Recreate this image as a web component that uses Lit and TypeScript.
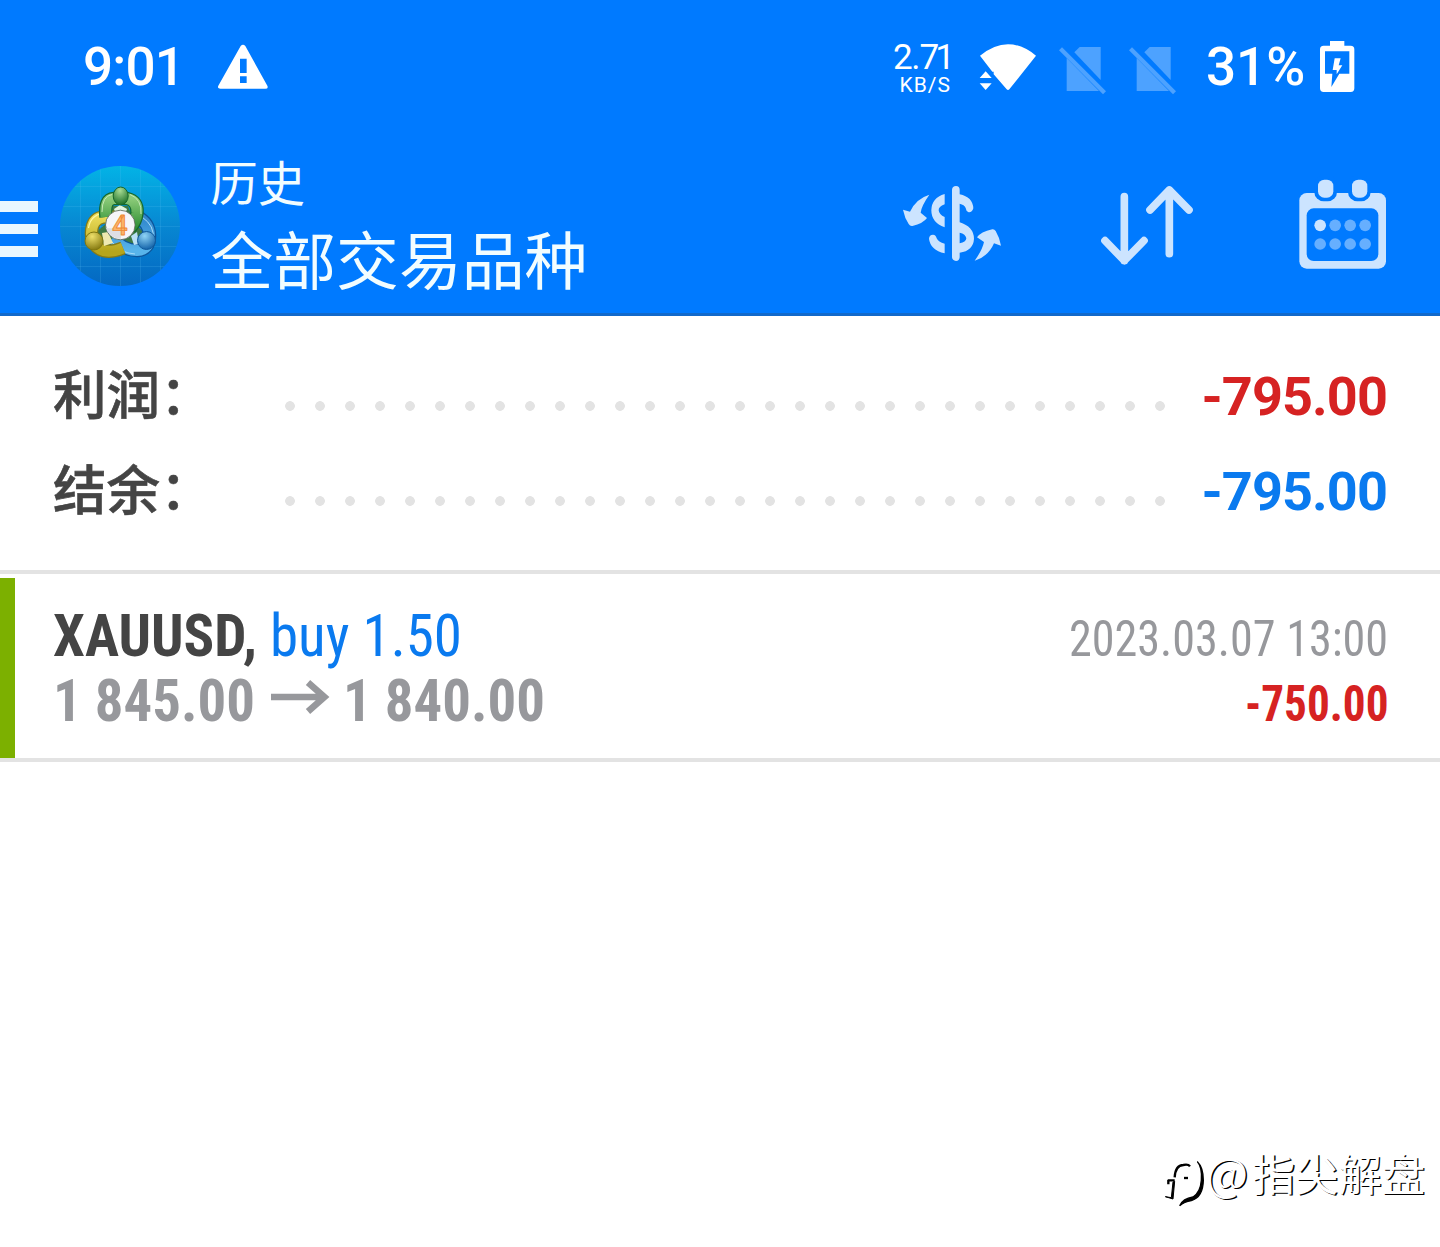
import { LitElement, html, svg, css } from "lit";
import { customElement, property } from "lit/decorators.js";

/* Single line of condensed type, fitted to a known advance width. */
@customElement("fit-line")
class FitLine extends LitElement {
  @property() text = "";
  @property({ type: Number }) width = 100;
  @property({ type: Number }) size = 60;
  @property({ type: Number }) weight = 400;

  static styles = css`
    :host { display: block; height: 65px; }
    svg { display: block; overflow: visible; }
    text {
      font-family: "Roboto Condensed", Roboto, sans-serif;
      font-stretch: 75%;
      fill: currentColor;
    }
  `;

  render() {
    return html`<svg width=${this.width} height="65">
      <text x="0" y="52" font-size=${this.size} font-weight=${this.weight}
        textLength=${this.width} lengthAdjust="spacingAndGlyphs">${this.text}</text>
    </svg>`;
  }
}

@customElement("status-bar")
class StatusBar extends LitElement {
  static styles = css`
    :host { display: flex; align-items: flex-start; height: 134px; box-sizing: border-box;
      padding: 40px 85px 0 83px; color: #fff; font-family: Roboto, sans-serif; }
    svg { display: block; height: 56px; flex: none; }
    .big { font-size: 53px; font-weight: 500; line-height: 55px; white-space: nowrap; }
    .time { width: 135px; letter-spacing: -0.8px; }
    .spacer { flex: 1; }
    .net { width: 58px; text-align: right; margin-right: 28px; }
    .rate { font-size: 35px; line-height: 35px; letter-spacing: -2.4px; }
    .dot { letter-spacing: -1px; margin-left: 1px; }
    .seven { letter-spacing: -4px; }
    .unit { font-size: 21px; line-height: 20px; letter-spacing: 1px; }
    .wifi { width: 58px; margin-right: 22px; }
    .sim { width: 47px; margin-right: 23px; }
    .last { margin-right: 30px; }
    .pct { width: 113px; }
    .bat { width: 36px; }
  `;

  sim(cls: string) {
    return html`<svg class=${cls} viewBox="567 60 141 168" fill="#4da2ff">
      <path d="M613 97 629 81H692V180Z"/>
      <path d="M590 114 687 213H590Z"/>
      <path d="M576 82 708 214 699 223 567 91Z"/>
    </svg>`;
  }

  render() {
    return html`
      <div class="big time">9:01</div>
      <svg width="50" viewBox="474 60 150 168">
        <path fill="#fff" fill-rule="evenodd" d="M542 78Q549 70 556 78L622 197Q626 206 616 206H481Q471 206 475 197ZM540 116V159H560V116ZM540 169V189H560V169Z"/>
      </svg>
      <div class="spacer"></div>
      <div class="net"><div class="rate">2<span class="dot">.</span><span class="seven">7</span>1</div><div class="unit">KB/S</div></div>
      <svg class="wifi" viewBox="327 60 174 168" fill="#fff">
        <path d="M330 107Q414 38 498 107L418 208Q414 212 410 208L371 163V155H367Z"/>
        <path d="M347 154 365 174H329ZM329 190H365L347 210Z"/>
      </svg>
      ${this.sim("sim")}${this.sim("sim last")}
      <div class="big pct">31%</div>
      <svg class="bat" viewBox="387 60 108 168">
        <path fill="#fff" fill-rule="evenodd" d="M420 63H463V77H482Q493 77 493 88V205Q493 216 482 216H401Q390 216 390 205V88Q390 77 401 77H420ZM405 94V161H427L424 201 448 161H478V94ZM434 115H452L446 136H457L440 163V150H428Z"/>
      </svg>`;
  }
}

@customElement("app-logo")
class AppLogo extends LitElement {
  static styles = css`
    :host { display: block; width: 120px; height: 120px; }
    svg { display: block; }
    text { font-family: Roboto, sans-serif; font-weight: 500; }
  `;

  render() {
    const lines = [20.5, 40.5, 60.5, 80.5, 100.5];
    return html`<svg width="120" height="120" viewBox="0 0 120 120">
      <defs>
        <linearGradient id="bg" x1="0" y1="0" x2="0" y2="1">
          <stop offset="0" stop-color="#03b3e6"/><stop offset=".5" stop-color="#0787d2"/><stop offset="1" stop-color="#0468c2"/>
        </linearGradient>
        <linearGradient id="g" x1="0" y1="0" x2="0" y2="1"><stop offset="0" stop-color="#8ccb79"/><stop offset="1" stop-color="#2f8f35"/></linearGradient>
        <linearGradient id="y" x1="0" y1="0" x2="0" y2="1"><stop offset="0" stop-color="#e9da58"/><stop offset="1" stop-color="#b5a51c"/></linearGradient>
        <linearGradient id="b" x1="0" y1="0" x2="0" y2="1"><stop offset="0" stop-color="#2f86cc"/><stop offset="1" stop-color="#58b4ea"/></linearGradient>
        <radialGradient id="gh" cx=".45" cy=".2" r=".75"><stop offset="0" stop-color="#a9dc94"/><stop offset="1" stop-color="#23752c"/></radialGradient>
        <radialGradient id="yh" cx=".4" cy=".25" r=".75"><stop offset="0" stop-color="#eee06a"/><stop offset="1" stop-color="#877b12"/></radialGradient>
        <radialGradient id="bh" cx=".4" cy=".25" r=".75"><stop offset="0" stop-color="#8fd4f6"/><stop offset="1" stop-color="#1464aa"/></radialGradient>
        <clipPath id="c"><circle cx="60" cy="60" r="60"/></clipPath>
      </defs>
      <g clip-path="url(#c)">
        <rect width="120" height="120" fill="url(#bg)"/>
        ${lines.map((v) => svg`<path d="M${v} 0V120M0 ${v}H120" stroke="#5cc4f2" stroke-opacity=".18"/>`)}
      </g>
      <g stroke-linejoin="round" fill="none">
        <path d="M48 56 53 40H68L75 58 86 68 80 82H40L34 68Z" fill="#3d7a45"/>
        <path d="M78 51Q89 57 89.500 69Q90 84 77 84.500Q62 84 53 72" stroke="#0d559a" stroke-width="13.500"/>
        <path d="M78 51Q89 57 89.500 69Q90 84 77 84.500Q62 84 53 72" stroke="url(#b)" stroke-width="11"/>
        <path d="M82 51Q95 60 93 73M75 88Q60 87 52 76" stroke="#a8dcf8" stroke-width="1"/>
        <path d="M55 51.500Q36 48 32.500 60Q29 73 37 81Q46 89 63 82" stroke="#857b17" stroke-width="13.500"/>
        <path d="M55 51.500Q36 48 32.500 60Q29 73 37 81Q46 89 63 82" stroke="url(#y)" stroke-width="11"/>
        <path d="M50 47Q31 46 28.500 62" stroke="#fff7a2" stroke-width="1.200"/>
        <path d="M46 51Q44 33 54 32.500H67Q78 35 77 47Q76 56 70 62" stroke="#16682d" stroke-width="13.500"/>
        <path d="M46 51Q44 33 54 32.500H67Q78 35 77 47Q76 56 70 62" stroke="url(#g)" stroke-width="11"/>
        <path d="M42 46Q42 30 52 28.500M70 28.500Q82 33 81 48" stroke="#c5e8b7" stroke-width="1"/>
        <path d="M54 43 60 39 67 43 65 48H56Z" fill="#e3f5dd"/>
        <path d="M42 67 48 66 53 77 44 80Z" fill="#eee9b0"/>
        <path d="M77 66 71 70 74 79 79 78Z" fill="#b9e0f5"/>
        <ellipse cx="60.700" cy="30" rx="7.500" ry="9" fill="url(#gh)" stroke="#17662a"/>
        <circle cx="34" cy="75" r="9" fill="url(#yh)" stroke="#80760f"/>
        <circle cx="86.500" cy="74.500" r="9" fill="url(#bh)" stroke="#10599b"/>
        <circle cx="60.300" cy="59" r="14.800" fill="#f6f6f8" stroke="#51604d" stroke-width=".8"/>
        <path d="M46 62 61 63V73Q49 72 46 62Z" fill="#dedee4"/>
        <text x="52.300" y="68.500" font-size="27" fill="#fdb56a" stroke="#ee8a35" stroke-width=".9">4</text>
      </g>
    </svg>`;
  }
}

@customElement("tool-bar")
class ToolBar extends LitElement {
  static styles = css`
    :host { display: flex; align-items: flex-start; height: 182px; box-sizing: border-box;
      border-bottom: 3px solid #1269ca; color: #fff; padding: 0 53px 0 0; }
    .menu { display: flex; flex-direction: column; gap: 12px; width: 38px; padding-top: 67px; margin-right: 22px; }
    .bar { height: 10.5px; background: #e9f7ff; }
    app-logo { margin-top: 32px; margin-right: 30.5px; }
    .titles { flex: 1; font-family: "Noto Sans CJK SC", sans-serif; padding-top: 16px; color: #f2fdff; }
    .small { font-size: 47.3px; line-height: 62px; font-weight: 400; }
    .large { font-size: 62.8px; line-height: 90px; font-weight: 400; }
    .icon { display: block; height: 96px; margin-top: 42px; flex: none; }
    .swap { width: 104px; margin-right: 96px; }
    .sort { width: 95px; margin-right: 103px; }
    .cal { width: 89px; }
  `;

  render() {
    return html`
      <div class="menu"><div class="bar"></div><div class="bar"></div><div class="bar"></div></div>
      <app-logo></app-logo>
      <div class="titles"><div class="small">历史</div><div class="large">全部交易品种</div></div>
      <svg class="icon swap" viewBox="60 48 312 288" fill="#cce4ff">
        <path d="M148 104Q124 138 122 158L141 174Q130 190 97 198Q90 199 86 192Q74 174 69 149L90 155Q108 116 148 104Z"/>
        <path d="M284 302Q307 270 312 246L291 232Q302 216 337 208Q343 207 347 213Q358 231 363 257L342 250Q325 290 284 302Z"/>
        <path d="M194 102V133Q175 140 176 151Q177 164 194 171V202Q154 188 154 151Q155 113 194 102Z"/>
        <path d="M147 236Q148 224 159 224Q168 225 170 235Q175 247 194 251V280Q151 270 147 236Z"/>
        <path fill-rule="evenodd" d="M216 89Q217 78 228 78Q239 79 239 89V103Q278 111 280 145Q276 158 266 157Q258 154 257 144Q253 134 239 131V187Q281 200 282 236Q280 272 239 278V292Q238 303 228 303Q217 302 216 292ZM239 218V250Q258 247 259 235Q257 222 239 218Z"/>
      </svg>
      <svg class="icon sort" viewBox="660 48 285 288" fill="none" stroke="#cce4ff" stroke-width="23" stroke-linecap="round" stroke-linejoin="round">
        <path d="M733 110V302M675 242 733 302 792 242"/>
        <path d="M868 281V90M810 150 868 90 927 150"/>
      </svg>
      <svg class="icon cal" viewBox="84 48 267 288">
        <rect x="88" y="99" width="260" height="227" rx="22" fill="#cce4ff"/>
        <rect x="133" y="46" width="68" height="78" rx="28" fill="#007aff"/>
        <rect x="234" y="46" width="68" height="78" rx="28" fill="#007aff"/>
        <rect x="144" y="59" width="46" height="54" rx="19" fill="#cce4ff"/>
        <rect x="246" y="59" width="46" height="54" rx="19" fill="#cce4ff"/>
        <rect x="110" y="145" width="215" height="158" rx="21" fill="#007aff"/>
        ${[0, 1, 2, 3, 4, 5, 6, 7].map((i) => svg`<circle cx=${150.5 + (i % 4) * 45} cy=${i < 4 ? 196 : 252} r="17.5" fill=${i === 0 ? "#cce4ff" : "#66afff"}/>`)}
      </svg>`;
  }
}

@customElement("app-root")
class AppRoot extends LitElement {
  static styles = css`
    :host { display: flex; flex-direction: column; width: 1440px; height: 1247px; background: #fff; overflow: hidden; }
    .head { background: #007aff; }
    .summary { height: 258px; box-sizing: border-box; padding-top: 34px; border-bottom: 4px solid #e3e3e3; }
    .row { display: flex; height: 95px; padding: 0 53px; align-items: flex-start; }
    .name { width: 232px; font: 500 53.5px/83px "Noto Sans CJK SC", sans-serif; color: #444; white-space: nowrap;
      -webkit-text-stroke: 0.6px #444; }
    .dots { width: 880px; height: 10px; margin-top: 51px;
      background: radial-gradient(circle at 5px 5px, #e3e3e3 4.5px, transparent 5.2px) 0 0 / 30px 10px repeat-x; }
    .sum { flex: 1; text-align: right; font: 700 54px/93px Roboto, sans-serif; letter-spacing: -0.9px; }
    .red { color: #d62222; }
    .blue { color: #0a7aef; }
    .deal { display: flex; margin-top: 4px; height: 184px; box-sizing: border-box; border-bottom: 4px solid #e3e3e3; }
    .mark { width: 15px; background: #7cb000; }
    .left { flex: 1; padding: 26px 0 0 38px; }
    .line { display: flex; height: 65px; }
    .dark { color: #444; margin-right: 13px; }
    .grey { color: #97989c; }
    .arrow { display: block; width: 60px; height: 65px; margin: 0 12px 0 16px; }
    .right { display: flex; flex-direction: column; align-items: flex-end; padding: 26px 52px 0 0; }
    .foot { flex: 1; display: flex; align-items: flex-end; justify-content: flex-end; padding: 0 15px 33px 0; }
    .wm { display: block; margin: 0 4px 0 0; }
    .author { display: flex; align-items: baseline; font: 400 43.3px/64px "Noto Sans CJK SC", sans-serif; color: #fff;
      text-shadow: 1.4px 1px 0 #000; white-space: nowrap; padding-bottom: 10px; }
    .at { font-size: 46px; line-height: 60px; font-weight: 300; width: 43.5px; margin-left: -1px; text-indent: -2px; }
  `;

  render() {
    return html`
      <div class="head"><status-bar></status-bar><tool-bar></tool-bar></div>
      <div class="summary">
        <div class="row"><div class="name">利润：</div><div class="dots"></div><div class="sum red">-795.00</div></div>
        <div class="row"><div class="name">结余：</div><div class="dots"></div><div class="sum blue">-795.00</div></div>
      </div>
      <div class="deal">
        <div class="mark"></div>
        <div class="left">
          <div class="line">
            <fit-line class="dark" text="XAUUSD," width="204" weight="700"></fit-line>
            <fit-line class="blue" text="buy 1.50" width="192" weight="420"></fit-line>
          </div>
          <div class="line grey">
            <fit-line text="1 845.00" width="202" weight="700"></fit-line>
            <svg class="arrow" viewBox="0 0 60 65"><path d="M0 28H54M37 13.500 53.500 28 37 42.500" fill="none" stroke="currentColor" stroke-width="6.500"/></svg>
            <fit-line text="1 840.00" width="202" weight="700"></fit-line>
          </div>
        </div>
        <div class="right">
          <fit-line class="grey" text="2023.03.07 13:00" width="319" size="50"></fit-line>
          <fit-line class="red" text="-750.00" width="143.5" size="50" weight="700"></fit-line>
        </div>
      </div>
      <div class="foot">
        <svg class="wm" width="42" height="56" viewBox="66 84 126 168" fill="none" stroke="#000">
          <path d="M81 151H101M82 149V163" stroke-width="7"/>
          <path d="M101 142Q103 106 127 105Q142 102 147 109" stroke-width="7"/>
          <path d="M101 154 96 207 73 200 91 203 96 156Z" fill="#000" stroke-width="3"/>
          <path d="M169 95Q184 112 181 151Q178 188 156 201Q126 206 116 227Q129 216 151 212Q186 202 187 151Q187 112 169 95Z" fill="#000" stroke-width="4"/>
          <path d="M129 144H141" stroke-width="7"/>
        </svg>
        <div class="author"><span class="at">@</span><span>指尖解盘</span></div>
      </div>`;
  }
}
